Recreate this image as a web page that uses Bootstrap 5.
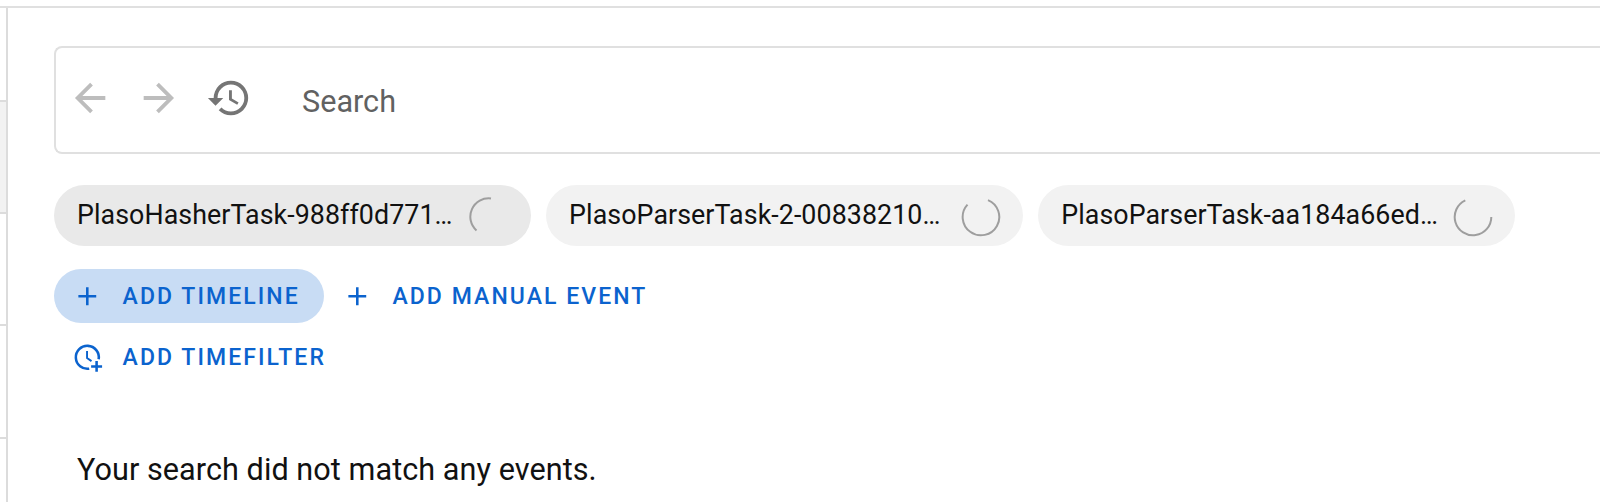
<!DOCTYPE html>
<html lang="en">
<head>
<meta charset="utf-8">
<title>Timesketch</title>
<link href="https://cdn.jsdelivr.net/npm/bootstrap@5.3.0/dist/css/bootstrap.min.css" rel="stylesheet">
<style>
body{font-family:Roboto,sans-serif;color:#1b1b1b;background:#fff}
.app-shell{height:502px;padding-top:6px}
.shell-body{border-top:2px solid #e0e0e0}
.side-strip{width:8px;border-right:2px solid #dcdcdc;padding-top:92px}
.side-item{height:112.2px;flex:none;border-top:2px solid #dcdcdc}
.side-item.current{background:#f2f2f2}
.main-pane{padding:38px 0 0 46px}
.search-box{height:108px;border:2px solid #e0e0e0;border-right:0;border-radius:8px 0 0 8px;padding-left:11px}
.search-box svg{width:46px;height:46px;flex:none;margin-top:-4px}
.search-box .forward{margin-left:23px}
.search-box .history{margin-left:24px}
.search-field{font-size:30.6px;line-height:40px;color:#616161;margin:4px 0 0 50px}
.chip-row{margin-top:31px;gap:15.5px}
.task-chip{width:476.6px;height:61px;background:#f2f2f2;padding:0 22px 0 23px;font-size:26.8px;letter-spacing:.07px;color:#111}
.task-chip.hovered{background:#e9e9e9}
.task-chip svg{width:40px;height:40px;margin-top:2px}
.actions{margin-top:23px}
.action-btn{height:54px;padding:2px 24px 0 18px;color:#0b63ce;font-size:23px;font-weight:500;letter-spacing:2.07px;border:0;line-height:52px}
.action-btn.soft{background:#c8dcf4}
.action-btn svg{width:30.6px;height:30.6px;margin:-2px 20px 0 0}
.actions-second{margin-top:7px}
.empty-note{font-size:30.6px;letter-spacing:.06px;line-height:40px;margin:66px 0 0 23px;color:#111}
</style>
</head>
<body class="overflow-hidden">
<div class="app-shell d-flex flex-column">
 <div class="shell-body d-flex flex-grow-1 overflow-hidden">
  <aside class="side-strip d-flex flex-column flex-shrink-0">
   <div class="side-item current"></div><div class="side-item"></div><div class="side-item"></div><div class="side-item"></div>
  </aside>
  <main class="main-pane flex-grow-1">
   <div class="search-box d-flex align-items-center">
    <svg viewBox="0 0 24 24" fill="#bdbdbd"><path d="M20,11V13H8L13.5,18.5L12.08,19.92L4.16,12L12.08,4.08L13.5,5.5L8,11H20Z"/></svg>
    <svg class="forward" viewBox="0 0 24 24" fill="#bdbdbd"><path d="M4,11V13H16L10.5,18.5L11.92,19.92L19.84,12L11.92,4.08L10.5,5.5L16,11H4Z"/></svg>
    <svg class="history" viewBox="0 0 24 24" fill="#757575"><path d="M13.5,8H12V13L16.28,15.54L17,14.33L13.5,12.25V8M13,3A9,9 0 0,0 4,12H1L4.96,16.03L9,12H6A7,7 0 0,1 13,5A7,7 0 0,1 20,12A7,7 0 0,1 13,19C11.07,19 9.32,18.21 8.06,16.94L6.64,18.36C8.27,20 10.5,21 13,21A9,9 0 0,0 22,12A9,9 0 0,0 13,3"/></svg>
    <span class="search-field">Search</span>
   </div>
   <div class="chip-row d-flex">
    <div class="task-chip hovered rounded-pill d-flex align-items-center justify-content-between"><span>PlasoHasherTask-988ff0d771…</span><svg viewBox="0 0 40 40" fill="none" stroke="#9e9e9e" stroke-width="2"><path d="M22 1.5A18.4 18.4 0 0 0 7.5 33.5"/></svg></div>
    <div class="task-chip rounded-pill d-flex align-items-center justify-content-between"><span>PlasoParserTask-2-00838210…</span><svg viewBox="0 0 40 40" fill="none" stroke="#9e9e9e" stroke-width="2"><path d="M27 3.1A18.3 18.3 0 1 1 6.5 7.6"/></svg></div>
    <div class="task-chip rounded-pill d-flex align-items-center justify-content-between"><span>PlasoParserTask-aa184a66ed…</span><svg viewBox="0 0 40 40" fill="none" stroke="#9e9e9e" stroke-width="2"><path d="M38.3 20A18.3 18.3 0 1 1 12.3 3.4"/></svg></div>
   </div>
   <div class="actions d-flex">
    <button class="action-btn soft btn rounded-pill d-flex align-items-center"><svg viewBox="0 0 24 24" fill="currentColor"><path d="M19,13H13V19H11V13H5V11H11V5H13V11H19V13Z"/></svg>ADD TIMELINE</button>
    <button class="action-btn btn rounded-pill d-flex align-items-center"><svg viewBox="0 0 24 24" fill="currentColor"><path d="M19,13H13V19H11V13H5V11H11V5H13V11H19V13Z"/></svg>ADD MANUAL EVENT</button>
   </div>
   <div class="actions-second d-flex">
    <button class="action-btn btn rounded-pill d-flex align-items-center"><svg viewBox="0 0 24 24" fill="none" stroke="currentColor" stroke-width="2"><path d="M20.9 13.5A9 9 0 1 0 13.5 20.9"/><path d="M11.8 7V12.6L15.3 15" stroke-width="1.5"/><path d="M19.3 15V23.4M15 19.2H23.6"/></svg>ADD TIMEFILTER</button>
   </div>
   <p class="empty-note">Your search did not match any events.</p>
  </main>
 </div>
</div>
<script src="https://cdn.jsdelivr.net/npm/bootstrap@5.3.0/dist/js/bootstrap.bundle.min.js"></script>
</body>
</html>
